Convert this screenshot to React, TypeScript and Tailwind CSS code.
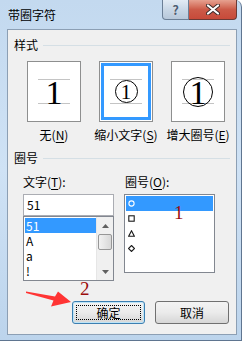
import React from 'react';

const FONT = '"Noto Sans CJK SC", "Noto Sans", "DejaVu Sans", sans-serif';

// little shapes used in the 圈号 list
function Shape({ kind, color }: { kind: string; color: string }) {
  return (
    <svg width="7" height="7" viewBox="0 0 7 7" className="block">
      {kind === 'circle' && <circle cx="3.5" cy="3.5" r="2.6" fill="none" stroke={color} strokeWidth="1.1" />}
      {kind === 'square' && <rect x="0.8" y="0.8" width="5.4" height="5.4" fill="none" stroke={color} strokeWidth="1.1" />}
      {kind === 'tri' && <polygon points="3.5,0.8 6.3,6.2 0.7,6.2" fill="none" stroke={color} strokeWidth="1.1" />}
      {kind === 'diamond' && <polygon points="3.5,0.5 6.5,3.5 3.5,6.5 0.5,3.5" fill="none" stroke={color} strokeWidth="1.1" />}
    </svg>
  );
}

function U({ children }: { children: React.ReactNode }) {
  return <span className="underline underline-offset-2">{children}</span>;
}

function Section({ title }: { title: string }) {
  return (
    <div className="flex items-center h-[16px] pl-[6px] pr-[6px]">
      <span className="leading-[16px]">{title}</span>
      <div className="flex-1 ml-[5px] h-px bg-[#d5dfe5]" />
    </div>
  );
}

const SERIF = { fontFamily: '"Liberation Serif", serif' };

function Preview({ mode, selected }: { mode: 'none' | 'small' | 'big'; selected?: boolean }) {
  return (
    <div className="w-[54px] h-[61px] border border-[#8e8f8f] bg-white p-px">
      <div className={`w-full h-full flex items-center justify-center ${selected ? 'border-[3px] border-[#3399ff]' : ''}`}>
        <div className="relative w-[32px] h-[25px] border-y border-[#c4c4c4] flex items-center justify-center">
          {mode === 'none' && (
            <span className="text-[34px] leading-none text-black mt-[2px]" style={SERIF}>1</span>
          )}
          {mode === 'small' && (
            <div className="w-[23px] h-[23px] rounded-full border border-black flex items-center justify-center">
              <span className="text-[21px] leading-none text-black mt-[1px]" style={SERIF}>1</span>
            </div>
          )}
          {mode === 'big' && (
            <div className="absolute w-[30px] h-[30px] rounded-full border border-black flex items-center justify-center">
              <span className="text-[34px] leading-none text-black mt-[2px]" style={SERIF}>1</span>
            </div>
          )}
        </div>
      </div>
    </div>
  );
}

function WinButton({ label, isDefault }: { label: string; isDefault?: boolean }) {
  return (
    <div
      className={`h-[23px] rounded-[3px] border flex items-center justify-center bg-gradient-to-b from-[#f3f3f3] via-[#ebebeb] to-[#d6d6d6] ${
        isDefault ? 'w-[73px] border-[#3c7fb1] shadow-[inset_0_0_0_1px_#bde4f7]' : 'w-[74px] border-[#707070]'
      }`}
    >
      <div className={`flex items-center justify-center w-[calc(100%-6px)] h-[calc(100%-6px)] ${isDefault ? 'border border-dotted border-black' : ''}`}>
        <span className="text-[12px] leading-none text-black">{label}</span>
      </div>
    </div>
  );
}

export default function App() {
  const leftItems = ['51', 'A', 'a', '!'];
  const shapes = ['circle', 'square', 'tri', 'diamond'];
  const shapeColors = ['#ffffff', '#1a1a1a', '#1a1a1a', '#1a1a1a'];

  return (
    <div className="w-[244px] h-[342px] bg-white overflow-hidden relative" style={{ fontFamily: FONT }}>
      {/* window frame */}
      <div className="w-[242px] h-[341px] rounded-tr-[7px] border-r border-b border-[#5f7590] bg-gradient-to-b from-[#c3d9ef] via-[#cfe2f5] to-[#bcd4ec] flex flex-col">
        {/* title bar */}
        <div className="h-[29px] flex items-start justify-between shrink-0">
          <span className="text-[12px] leading-none text-black pl-[8px] pt-[9px]">带圈字符</span>
          <div className="flex mr-[4px]">
            <div className="w-[27px] h-[20px] rounded-bl-[4px] border border-t-0 border-[#6b7f96] bg-gradient-to-b from-[#e2ebf4] via-[#c9d7e6] to-[#b7c8da] flex items-center justify-center">
              <span className="text-[13px] font-bold leading-none text-[#4d5f74] [text-shadow:0_0_1px_#fff]">?</span>
            </div>
            <div className="w-[48px] h-[20px] rounded-br-[4px] border border-t-0 border-l-0 border-[#6b3a36] bg-gradient-to-b from-[#e6a190] via-[#cc5a48] to-[#c74a3a] flex items-center justify-center">
              <svg width="14" height="11" viewBox="0 0 14 11">
                <path d="M2 1.5 L12 9.5 M12 1.5 L2 9.5" stroke="#3d2a28" strokeWidth="4" strokeLinecap="round" />
                <path d="M2 1.5 L12 9.5 M12 1.5 L2 9.5" stroke="#ffffff" strokeWidth="2.2" strokeLinecap="round" />
              </svg>
            </div>
          </div>
        </div>

        {/* client area */}
        <div className="ml-[7px] mr-[4px] h-[306px] border border-[#8c9fb4] bg-[#f0f0f0] text-[12px] text-black flex flex-col pt-[7px]">
          <Section title="样式" />

          <div className="flex pl-[19px] gap-[18px] mt-[8px]">
            {[
              { mode: 'none' as const, label: <>无(<U>N</U>)</> },
              { mode: 'small' as const, label: <>缩小文字(<U>S</U>)</>, selected: true },
              { mode: 'big' as const, label: <>增大圈号(<U>E</U>)</> },
            ].map((p, i) => (
              <div key={i} className="w-[54px] flex flex-col items-center">
                <Preview mode={p.mode} selected={p.selected} />
                <span className="mt-[5px] leading-[16px] whitespace-nowrap">{p.label}</span>
              </div>
            ))}
          </div>

          <div className="mt-[7px]">
            <Section title="圈号" />
          </div>

          <div className="flex pl-[15px] mt-[8px]">
            {/* 文字 */}
            <div className="w-[91px] flex flex-col">
              <span className="leading-[16px]">文字(<U>T</U>):</span>
              <div className="mt-[4px] h-[22px] border border-[#abadb3] bg-white flex items-center pl-[3px]">
                <span className="leading-none">51</span>
              </div>
              <div className="h-[65px] border border-[#828790] bg-white flex">
                <div className="flex-1 flex flex-col pt-px pl-px">
                  {leftItems.map((t, i) => (
                    <div key={t} className={`h-[15px] leading-[15px] text-[12px] pl-px overflow-hidden ${i === 0 ? 'bg-[#3399ff] text-white' : ''}`}>
                      {t}
                    </div>
                  ))}
                </div>
                <div className="w-[17px] flex flex-col bg-[#f0f0f0] border-l border-[#e6e6e6]">
                  <div className="h-[17px] flex items-center justify-center">
                    <svg width="7" height="4" viewBox="0 0 7 4"><polygon points="3.5,0 7,4 0,4" fill="#606060" /></svg>
                  </div>
                  <div className="mx-px h-[16px] rounded-[2px] border border-[#979797] bg-gradient-to-r from-[#f2f2f2] to-[#d8d8d8]" />
                  <div className="flex-1" />
                  <div className="h-[17px] flex items-center justify-center">
                    <svg width="7" height="4" viewBox="0 0 7 4"><polygon points="0,0 7,0 3.5,4" fill="#606060" /></svg>
                  </div>
                </div>
              </div>
            </div>

            {/* 圈号 */}
            <div className="w-[91px] ml-[10px] flex flex-col">
              <span className="leading-[16px] pl-px">圈号(<U>O</U>):</span>
              <div className="mt-[4px] h-[79px] border border-[#828790] bg-white flex flex-col p-px">
                {shapes.map((s, i) => (
                  <div key={s} className={`h-[15px] flex items-center pl-[2px] ${i === 0 ? 'bg-[#3399ff]' : ''}`}>
                    <Shape kind={s} color={shapeColors[i]} />
                  </div>
                ))}
              </div>
            </div>
          </div>

          <div className="flex justify-end gap-[10px] pr-[7px] mt-[20px]">
            <WinButton label="确定" isDefault />
            <WinButton label="取消" />
          </div>
        </div>
      </div>

      {/* red annotations over the dialog */}
      <span className="absolute left-[174px] top-[203px] text-[19px] leading-none text-[#9b0d0d]" style={SERIF}>1</span>
      <span className="absolute left-[80px] top-[279px] text-[19px] leading-none text-[#9b0d0d]" style={SERIF}>2</span>
      <svg className="absolute left-0 top-0" width="244" height="342" viewBox="0 0 244 342">
        <polygon points="26,291.5 55,296.5 58,291.5 71,302 51,306.5 53.5,300.5 26,293" fill="#ff3434" />
      </svg>
    </div>
  );
}
